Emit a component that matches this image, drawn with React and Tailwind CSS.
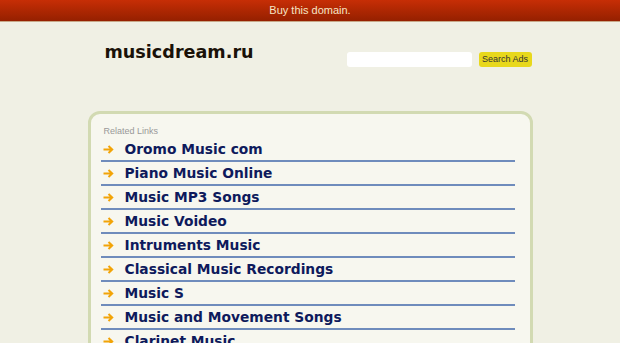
import React from "react";

const links = [
  "Oromo Music com",
  "Piano Music Online",
  "Music MP3 Songs",
  "Music Voideo",
  "Intruments Music",
  "Classical Music Recordings",
  "Music S",
  "Music and Movement Songs",
  "Clarinet Music",
];

// small orange arrow before each link
const Arrow = () => (
  <svg width="11" height="9" viewBox="0 0 11 9" className="shrink-0">
    <path
      d="M0.5 4.5H9M5.5 1L9.2 4.5L5.5 8"
      fill="none"
      stroke="#f2a408"
      strokeWidth="2"
    />
  </svg>
);

export default function App() {
  return (
    <div className="min-h-[343px] bg-[#f0f0e4] overflow-hidden">
      {/* top banner */}
      <div className="h-[22px] bg-gradient-to-b from-[#c72e06] to-[#952000] border-b border-[#c8a888] flex items-center justify-center">
        <a className="text-[11px] text-[#f6e6c6] font-['Liberation_Sans',Arial,sans-serif]">
          Buy this domain.
        </a>
      </div>

      <div className="w-[445px] mx-auto">
        {/* header */}
        <div className="flex items-start justify-between pt-[19px] h-[89px]">
          <h1 className="pl-[17px] text-[17.6px] leading-[23px] font-bold text-[#1a1208] font-['DejaVu_Sans',sans-serif]">
            musicdream.ru
          </h1>
          <div className="flex items-center gap-[7px] mt-[11px] pr-[1px]">
            <div className="w-[125px] h-[15px] bg-white rounded-[3px]" />
            <button className="h-[15px] w-[53px] bg-[#e8d81c] rounded-[3px] text-[9px] leading-[15px] text-[#333] font-['Liberation_Sans',Arial,sans-serif]">
              Search Ads
            </button>
          </div>
        </div>

        {/* related links box */}
        <div className="border-[3px] border-[#d2dab2] rounded-[12px] bg-[#f7f7ef] pl-[10px] pr-[15px] pt-[11px] h-[300px]">
          <div className="pl-[3px] text-[9px] leading-[12px] text-[#999] font-['Liberation_Sans',Arial,sans-serif]">
            Related Links
          </div>
          <ul className="mt-[1px]">
            {links.map((l, i) => (
              <li
                key={i}
                className="h-[24px] flex items-center border-b-2 border-[#6f8cbc] font-['DejaVu_Sans',sans-serif] font-bold"
              >
                <span className="w-[24px] pl-[2px] flex items-center">
                  <Arrow />
                </span>
                <span className="text-[13.8px] text-[#0e1a5c]">{l}</span>
              </li>
            ))}
          </ul>
        </div>
      </div>
    </div>
  );
}
